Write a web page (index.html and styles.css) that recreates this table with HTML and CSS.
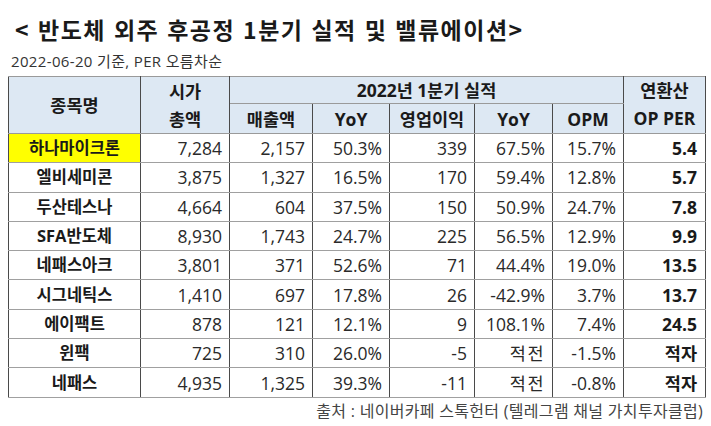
FILE: index.html
```html
<!DOCTYPE html>
<html lang="ko">
<head>
<meta charset="utf-8">
<link rel="stylesheet" href="styles.css">
</head>
<body>
<div class="page">
  <h1 class="title">&lt; 반도체 외주 후공정 1분기 실적 및 밸류에이션&gt;</h1>
  <p class="sub">2022-06-20 기준, PER 오름차순</p>
  <table class="tbl">
    <colgroup>
      <col class="c1"><col class="c2"><col class="c3"><col class="c4"><col class="c5"><col class="c6"><col class="c7"><col class="c8">
    </colgroup>
    <thead>
      <tr class="h1">
        <th rowspan="2">종목명</th>
        <th rowspan="2" class="two">시가<br>총액</th>
        <th colspan="5">2022년 1분기 실적</th>
        <th class="top">연환산</th>
      </tr>
      <tr class="h2">
        <th>매출액</th><th>YoY</th><th>영업이익</th><th>YoY</th><th>OPM</th><th class="bot">OP PER</th>
      </tr>
    </thead>
    <tbody>
      <tr><td class="name hl">하나마이크론</td><td>7,284</td><td>2,157</td><td>50.3%</td><td>339</td><td>67.5%</td><td>15.7%</td><td class="per">5.4</td></tr>
      <tr><td class="name">엘비세미콘</td><td>3,875</td><td>1,327</td><td>16.5%</td><td>170</td><td>59.4%</td><td>12.8%</td><td class="per">5.7</td></tr>
      <tr><td class="name">두산테스나</td><td>4,664</td><td>604</td><td>37.5%</td><td>150</td><td>50.9%</td><td>24.7%</td><td class="per">7.8</td></tr>
      <tr><td class="name">SFA반도체</td><td>8,930</td><td>1,743</td><td>24.7%</td><td>225</td><td>56.5%</td><td>12.9%</td><td class="per">9.9</td></tr>
      <tr><td class="name">네패스아크</td><td>3,801</td><td>371</td><td>52.6%</td><td>71</td><td>44.4%</td><td>19.0%</td><td class="per">13.5</td></tr>
      <tr><td class="name">시그네틱스</td><td>1,410</td><td>697</td><td>17.8%</td><td>26</td><td>-42.9%</td><td>3.7%</td><td class="per">13.7</td></tr>
      <tr><td class="name">에이팩트</td><td>878</td><td>121</td><td>12.1%</td><td>9</td><td>108.1%</td><td>7.4%</td><td class="per">24.5</td></tr>
      <tr><td class="name">윈팩</td><td>725</td><td>310</td><td>26.0%</td><td>-5</td><td class="kr">적전</td><td>-1.5%</td><td class="per">적자</td></tr>
      <tr><td class="name">네패스</td><td>4,935</td><td>1,325</td><td>39.3%</td><td>-11</td><td class="kr">적전</td><td>-0.8%</td><td class="per">적자</td></tr>
    </tbody>
  </table>
  <p class="src">출처 : 네이버카페 스톡헌터 (텔레그램 채널 가치투자클럽)</p>
</div>
</body>
</html>
```
FILE: styles.css
```css
html, body {
  margin: 0;
  padding: 0;
  background: #fff;
}
body {
  font-family: "Open Sans", "Noto Sans CJK KR", sans-serif;
  color: #222;
}
.page {
  padding: 0 6px 0 8px;
  display: flex;
  flex-direction: column;
}
.title {
  margin: 15px 0 0 7px;
  font-size: 23px;
  line-height: 28px;
  font-weight: 700;
  color: #1a1a1a;
  font-family: "Noto Sans CJK KR", sans-serif;
  letter-spacing: 1.5px;
}
.sub {
  margin: 8px 0 0 3px;
  font-size: 15px;
  line-height: 20px;
  color: #333;
  letter-spacing: 0.35px;
}
.tbl {
  margin-top: 5px;
  width: 697px;
  table-layout: fixed;
  border-collapse: collapse;
  border: 1.5px solid #3a3a3a;
  font-size: 17.5px;
}
.c1 { width: 132px; }
.c2 { width: 89px; }
.c3 { width: 83px; }
.c4 { width: 77px; }
.c5 { width: 85px; }
.c6 { width: 78px; }
.c7 { width: 71px; }
.c8 { width: 82px; }
.tbl th {
  background: #dde8f3;
  font-weight: 700;
  color: #1a1a1a;
  border-left: 1px solid #4a4a4a;
  border-right: 1px solid #4a4a4a;
  border-top: 1px solid #9a9a9a;
  border-bottom: 1px solid #9a9a9a;
  padding: 0;
  text-align: center;
  line-height: 20px;
  white-space: nowrap;
}
.tbl .h1 th { height: 26px; }
.tbl .h2 th { height: 28px; }
.tbl th.two { line-height: 28px; }
.tbl th.top { border-bottom: none; }
.tbl th.bot { border-top: none; }
.tbl td {
  height: 28.2px;
  padding: 0 7px 0 2px;
  text-align: right;
  border-left: 1px solid #4a4a4a;
  border-right: 1px solid #4a4a4a;
  border-top: 1px solid #a0a0a0;
  border-bottom: 1px solid #a0a0a0;
  color: #2a2a2a;
  line-height: 20px;
  white-space: nowrap;
}
.tbl td.name {
  text-align: center;
  font-weight: 700;
  font-size: 16.5px;
  color: #1a1a1a;
  padding: 0;
}
.tbl td.hl { background: #ffff00; }
.tbl td.per {
  font-weight: 700;
  color: #1a1a1a;
  padding-right: 8px;
}
.tbl td.kr { letter-spacing: 1.5px; }
.src {
  margin: 4px 2px 0 0;
  text-align: right;
  font-size: 16px;
  line-height: 20px;
  color: #444;
  letter-spacing: 0.3px;
}
```
